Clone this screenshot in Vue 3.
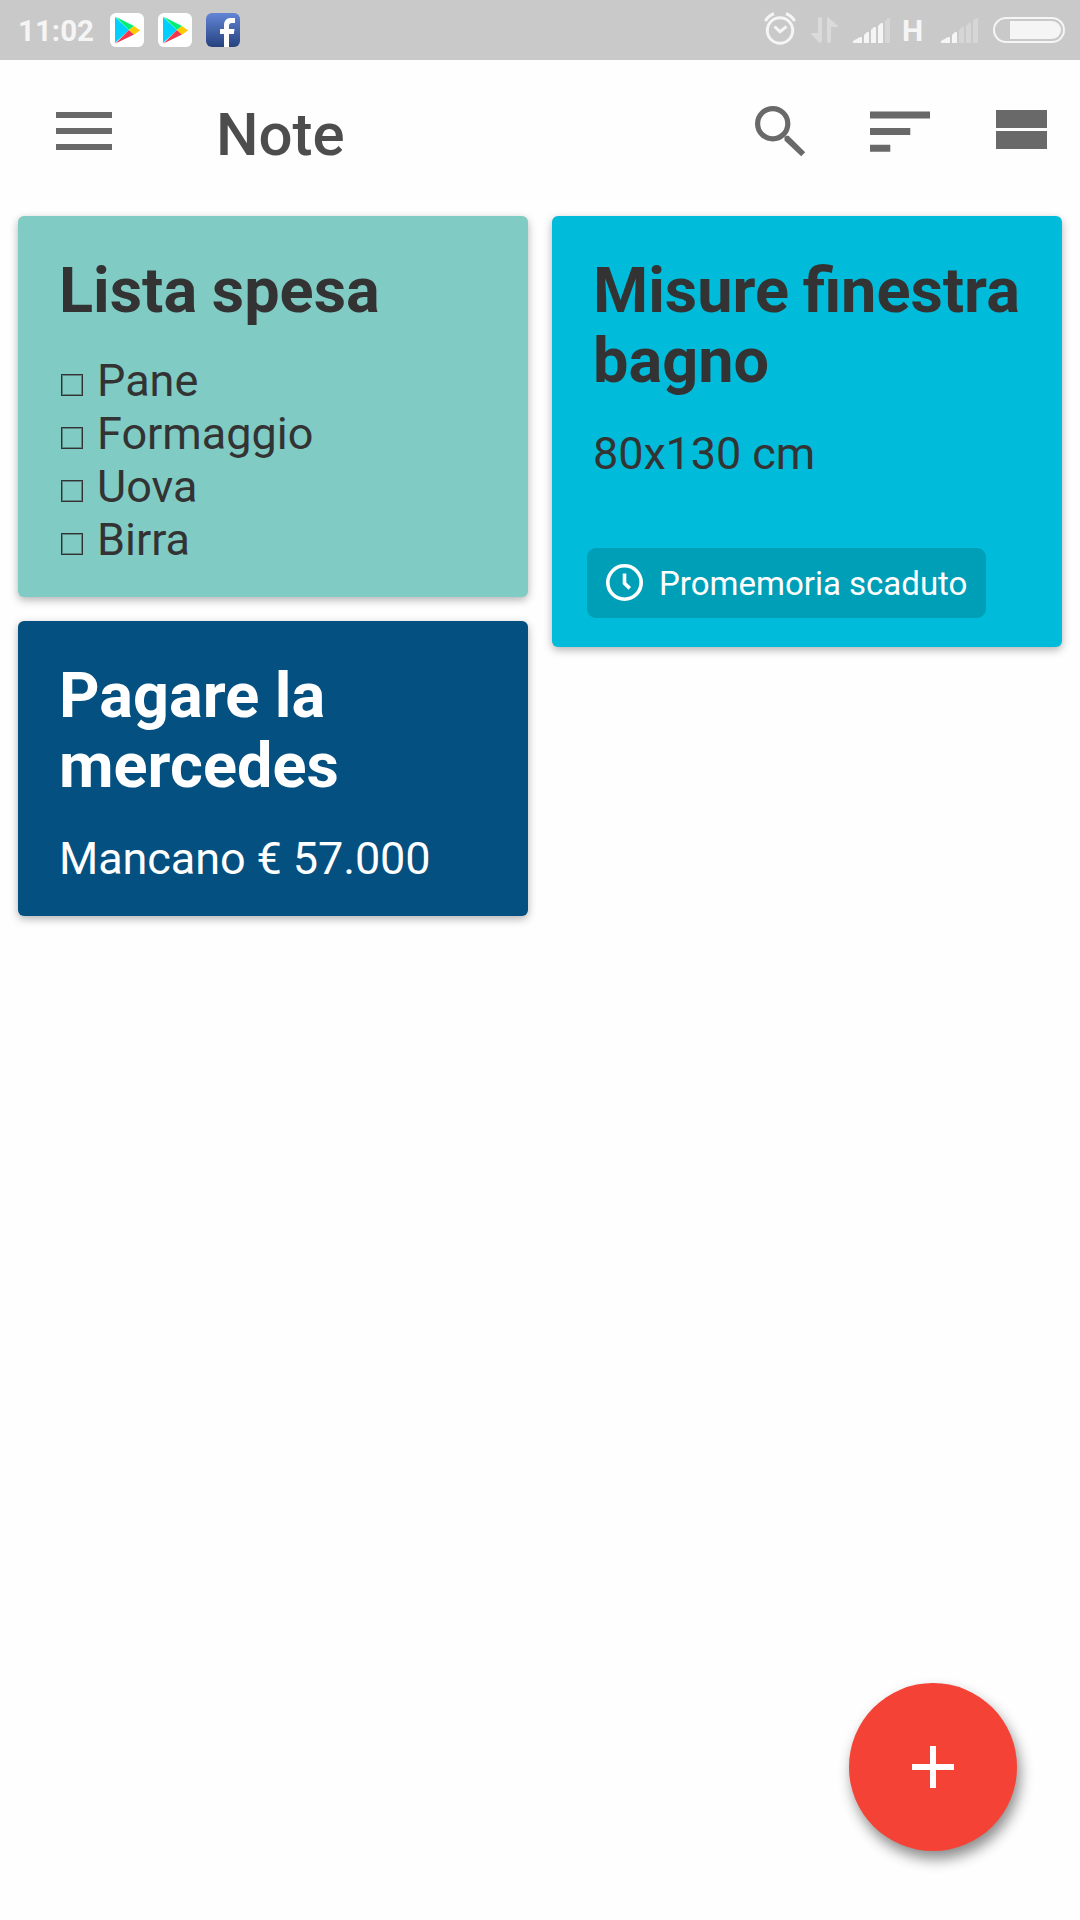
<template>
  <div class="screen">
    <div class="status">
      <div class="statusLeft">
        <span class="time">11:02</span>
        <svg v-for="n in 2" :key="n" class="appIco" viewBox="0 0 34 34">
          <rect width="34" height="34" rx="6" fill="#fff" />
          <path d="M5 4v26L19 17z" fill="#00cfff" />
          <path d="M5.500 3.800L24 13l-5 4z" fill="#00f076" />
          <path d="M5.500 30.500L24 21.500l-5-4.500z" fill="#f0374b" />
          <path d="M24 13l6 4.400-6 4.200-5-4.600z" fill="#ffc900" />
        </svg>
        <svg class="appIco" viewBox="0 0 34 34">
          <defs>
            <linearGradient id="fb" x1="0" y1="0" x2="0" y2="1">
              <stop offset="0" stop-color="#6285d6" />
              <stop offset="1" stop-color="#26427f" />
            </linearGradient>
          </defs>
          <rect width="34" height="34" rx="6" fill="url(#fb)" />
          <path d="M18 34V21h-4v-5h4v-3.500C18 7.500 20.500 5 25 5h4v5h-3c-2.400 0-3 1-3 3v3h5.500l-.7 5H23v13z" fill="#fff" />
        </svg>
      </div>

      <div class="statusRight">
        <svg class="alarm" viewBox="0 0 32 34" fill="none" stroke="#f5f5f5" stroke-width="3">
          <circle cx="16" cy="18.500" r="12.700" />
          <path d="M10.500 14.500l5.500 5.200 6.500-5.200" />
          <path d="M1.300 9C3 6 6 3 10 1.700M30.700 9C29 6 26 3 22 1.700" />
        </svg>
        <svg class="data" viewBox="0 0 27 26" fill="#dadada">
          <path d="M7 2a2 2 0 0 1 4 0v22a2 2 0 0 1-3 1.500L0 17v-1h7z" />
          <path d="M20 24a2 2 0 0 1-4 0V0h1l10 9v1h-7z" />
        </svg>
        <svg class="signal" viewBox="0 0 37 25">
          <path v-for="(b, i) in bars" :key="i" :d="b" :fill="i < 4 ? '#f5f5f5' : '#d6d6d6'" />
        </svg>
        <span class="net">H</span>
        <svg class="signal" viewBox="0 0 37 25">
          <path v-for="(b, i) in bars" :key="i" :d="b" :fill="i < 2 ? '#f5f5f5' : '#d6d6d6'" />
        </svg>
        <svg class="battery" viewBox="0 0 72 26">
          <rect x="1" y="1" width="70" height="24" rx="12" fill="none" stroke="#f5f5f5" stroke-width="2" />
          <path d="M17 4h42a9 9 0 0 1 0 18H17z" fill="#f5f5f5" />
        </svg>
      </div>
    </div>

    <header class="bar">
      <button class="iconBtn" type="button">
        <svg class="menu" viewBox="0 0 56 38">
          <path d="M0 0h56v6H0zM0 16h56v6H0zM0 32h56v6H0z" />
        </svg>
      </button>
      <h1 class="pageTitle">Note</h1>
      <div class="tools">
        <button class="iconBtn" type="button">
          <svg class="search" viewBox="0 0 51 51">
            <circle cx="17.700" cy="17.700" r="15.100" fill="none" stroke="#696969" stroke-width="5.200" />
            <path d="M29.500 34.500v-3.200l1.500-1.600h2.500L50.200 46.300l-4 4z" />
          </svg>
        </button>
        <button class="iconBtn" type="button">
          <svg class="sort" viewBox="0 0 60 41">
            <path d="M0 .4h60v7H0zM0 17.100h40.300v7H0zM0 33.700h20.300v7H0z" />
          </svg>
        </button>
        <button class="iconBtn" type="button">
          <svg class="view" viewBox="0 0 51 39">
            <path d="M0 0h51v18H0zM0 21h51v18H0z" />
          </svg>
        </button>
      </div>
    </header>

    <main class="board">
      <div v-for="(col, c) in columns" :key="c" class="column">
        <article v-for="note in col" :key="note.id" class="note" :class="note.theme">
          <h2 class="title">{{ note.title }}</h2>

          <ul v-if="note.items" class="list">
            <li v-for="it in note.items" :key="it" class="row">
              <span class="box"></span>
              <span>{{ it }}</span>
            </li>
          </ul>
          <p v-else class="text">{{ note.text }}</p>

          <div v-if="note.reminder" class="chip">
            <svg class="clock" viewBox="0 0 37 37" fill="none" stroke="#fff" stroke-width="3.600">
              <circle cx="18.500" cy="18.500" r="16.700" />
              <path d="M18.500 9.500v9.700l5.300 5.200" />
            </svg>
            <span class="chipText">{{ note.reminder }}</span>
          </div>
        </article>
      </div>
    </main>

    <button class="fab" type="button">
      <svg class="plus" viewBox="0 0 42 42">
        <path d="M18 0h6v18h18v6H24v18h-6V24H0v-6h18z" fill="#fff" />
      </svg>
    </button>
  </div>
</template>

<script setup>
import { ref } from "vue";

const columns = ref([
  [
    { id: 1, theme: "teal", title: "Lista spesa", items: ["Pane", "Formaggio", "Uova", "Birra"] },
    { id: 2, theme: "navy", title: "Pagare la mercedes", text: "Mancano € 57.000" },
  ],
  [
    { id: 3, theme: "cyan", title: "Misure finestra bagno", text: "80x130 cm", reminder: "Promemoria scaduto" },
  ],
]);

const bars = [
  "M0 25v-2l7-4h1q1 0 1 1v5z",
  "M11 25V17l3-3h1q1 0 1 1v10z",
  "M18 25V12l3-3h1q1 0 1 1v15z",
  "M25 25V8l3-3h1q1 0 1 1v19z",
  "M32 25V3l3-3h1q1 0 1 1v24z",
];
</script>

<style>
body { background: #fefefe; }
</style>

<style scoped>
.screen {
  position: relative;
  width: 1080px;
  height: 1920px;
  overflow: hidden;
  background: #fefefe;
  font-family: Roboto, sans-serif;
  color: #333;
}

svg { display: block; flex: none; }

.status {
  display: flex;
  justify-content: space-between;
  height: 60px;
  padding: 0 15px 0 18px;
  background: #c9c9c9;
  color: #f5f5f5;
}

.statusLeft {
  display: flex;
  align-items: center;
  gap: 14px;
}

.time {
  width: 78px;
  padding-top: 1px;
  font-size: 29.5px;
  line-height: 36px;
  font-weight: 700;
}

.appIco { width: 34px; height: 34px; }

.statusRight {
  display: flex;
  align-items: center;
}

.alarm { width: 32px; height: 34px; margin-right: 15px; margin-top: -2px; }
.data { width: 27px; height: 26px; margin-right: 15px; }
.signal { width: 37px; height: 25px; margin-top: 1px; }

.net {
  width: 51px;
  box-sizing: border-box;
  padding: 1px 6px 0 0;
  text-align: center;
  font-size: 30px;
  line-height: 36px;
  font-weight: 700;
}

.battery { width: 72px; height: 26px; margin-left: 15px; }

.bar {
  display: flex;
  align-items: center;
  height: 142px;
  padding: 0 33px 0 56px;
}

.iconBtn {
  padding: 0;
  border: none;
  background: none;
  cursor: pointer;
}

.iconBtn svg { fill: #696969; }

.menu { width: 56px; height: 38px; }

.pageTitle {
  margin: 7px 0 0 104px;
  font-size: 60px;
  line-height: 70px;
  font-weight: 500;
  color: #4d4d4d;
}

.tools {
  display: flex;
  align-items: center;
  margin-left: auto;
}

.search { width: 51px; height: 51px; margin-right: 64px; }
.sort { width: 60px; height: 41px; margin-right: 66px; }
.view { width: 51px; height: 39px; margin-top: -3px; }

.board {
  display: grid;
  grid-template-columns: 510px 510px;
  gap: 24px;
  align-items: start;
  padding: 14px 18px;
}

.column { display: grid; gap: 24px; }

.note {
  padding: 40px 38px 31px 41px;
  border-radius: 6px;
  box-shadow: 0 3px 8px rgba(0, 0, 0, .3);
}

.teal { background: #80cbc4; }
.navy { background: #045080; color: #fff; }
.cyan { background: #00bbd9; }
.cyan { padding-bottom: 29px; }

.title {
  margin: 0;
  font-size: 63px;
  line-height: 70px;
  font-weight: 700;
}

.teal .title { word-spacing: -1px; }
.cyan .title { word-spacing: -2px; }

.text {
  margin: 31px 0 0;
  font-size: 45px;
  line-height: 53px;
  letter-spacing: -.1px;
}

.list {
  margin: 28px 0 0;
  padding: 0;
  list-style: none;
  font-size: 45px;
  line-height: 53px;
}

.row {
  display: flex;
  align-items: baseline;
  gap: 14px;
}

.box {
  width: 22px;
  height: 22px;
  margin-left: 2px;
  box-sizing: border-box;
  border: 1px solid #333;
  box-shadow: inset 0 0 0 1px rgba(51, 51, 51, .45);
}

.chip {
  display: flex;
  align-items: center;
  gap: 16px;
  width: 399px;
  height: 70px;
  box-sizing: border-box;
  margin: 68px 0 0 -6px;
  padding-left: 19px;
  border-radius: 9px;
  background: #009fb8;
  color: #fff;
  font-size: 33px;
  line-height: 40px;
  white-space: nowrap;
}

.chipText { padding-top: 2px; }

.clock { width: 37px; height: 37px; margin-top: -2px; }

.fab {
  position: absolute;
  left: 849px;
  top: 1683px;
  display: grid;
  place-items: center;
  width: 168px;
  height: 168px;
  padding: 0;
  border: none;
  border-radius: 50%;
  background: #f44336;
  box-shadow: 3px 8px 14px rgba(0, 0, 0, .45);
  cursor: pointer;
}

.plus { width: 42px; height: 42px; }
</style>
